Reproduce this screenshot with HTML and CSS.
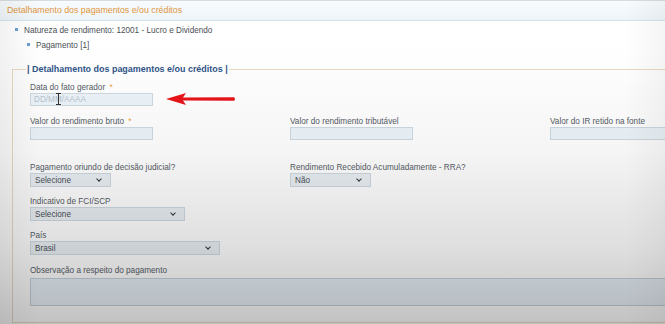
FILE: index.html
```html
<!DOCTYPE html>
<html lang="pt-BR">
<head>
    <meta charset="UTF-8">
    <meta name="viewport" content="width=device-width, initial-scale=1.0">
    <title>Detalhamento dos pagamentos e/ou créditos</title>
    <link rel="stylesheet" href="styles.css">
</head>
<body>
    <div class="panel-title">Detalhamento dos pagamentos e/ou créditos</div>

    <ul class="tree">
        <li>Natureza de rendimento: 12001 - Lucro e Dividendo
            <ul>
                <li>Pagamento [1]</li>
            </ul>
        </li>
    </ul>

    <fieldset class="group">
        <legend>| Detalhamento dos pagamentos e/ou créditos |</legend>

        <!-- data -->
        <div class="row first">
            <div class="field">
                <label for="dt-fato">Data do fato gerador <span class="req">*</span></label>
                <div class="mark-wrap">
                    <input type="text" id="dt-fato" class="txt" placeholder="DD/MM/AAAA">
                    <span class="ibeam"></span>
                    <svg class="arrow" width="70" height="14" viewBox="0 0 70 14">
                        <path d="M0 7 L20 1 L17 5.6 L68 5.2 Q70 7 68 8.8 L17 8.4 L20 13 Z" fill="#e8141a"/>
                    </svg>
                </div>
            </div>
        </div>

        <!-- valores -->
        <div class="row second">
            <div class="field">
                <label for="vl-bruto">Valor do rendimento bruto <span class="req">*</span></label>
                <input type="text" id="vl-bruto" class="txt">
            </div>
            <div class="field">
                <label for="vl-trib">Valor do rendimento tributável</label>
                <input type="text" id="vl-trib" class="txt">
            </div>
            <div class="field">
                <label for="vl-ir">Valor do IR retido na fonte</label>
                <input type="text" id="vl-ir" class="txt">
            </div>
        </div>

        <div class="row spaced">
            <div class="field">
                <label>Pagamento oriundo de decisão judicial?</label>
                <div class="sel w81">Selecione</div>
            </div>
            <div class="field">
                <label>Rendimento Recebido Acumuladamente - RRA?</label>
                <div class="sel w81">Não</div>
            </div>
        </div>

        <div class="row">
            <div class="field">
                <label>Indicativo de FCI/SCP</label>
                <div class="sel w155">Selecione</div>
            </div>
        </div>

        <div class="row">
            <div class="field">
                <label>País</label>
                <div class="sel w190">Brasil</div>
            </div>
        </div>

        <div class="row last">
            <div class="field full">
                <label for="obs">Observação a respeito do pagamento</label>
                <textarea id="obs" class="obs"></textarea>
            </div>
        </div>
    </fieldset>

    <div class="shade"></div>
</body>
</html>
```

FILE: styles.css
```css
body {
    margin: 0;
    width: 665px;
    height: 324px;
    overflow: hidden;
    position: relative;
    font-family: 'Liberation Sans', Arial, sans-serif;
    font-size: 8.2px;
    color: #555d66;
    background: #fff;
}

.panel-title {
    height: 19px;
    line-height: 19px;
    padding-left: 7px;
    font-size: 8.8px;
    color: #e0963c;
    background: linear-gradient(#f8fbfd, #eef5fa);
    border-top: 1px solid #d9dcde;
    border-bottom: 1px solid #d6e1e8;
}

.tree {
    list-style: none;
    margin: 2px 0 0 0;
    padding: 0 0 0 15px;
}

.tree ul {
    list-style: none;
    margin: 0;
    padding: 0 0 0 12px;
}

.tree li {
    line-height: 15px;
    color: #4a4f55;
}

.tree li::before {
    content: "";
    display: inline-block;
    width: 3px;
    height: 3px;
    margin: 0 6px 2px 0;
    background: #6a9ed0;
    vertical-align: middle;
}

.group {
    margin: 11px 0 0 12px;
    width: 900px;
    padding: 0 0 16px 17px;
    border: 1px solid #e9dcc2;
    box-sizing: border-box;
}

.group legend {
    padding: 0 1px;
    margin-left: -4px;
    font-size: 8.95px;
    font-weight: bold;
    color: #2f5488;
}

.row {
    display: grid;
    grid-template-columns: 260px 260px 260px;
    margin-top: 9px;
}

.row.first {
    margin-top: 8px;
}

.row.second {
    margin-top: 10px;
}

.row.spaced {
    margin-top: 22px;
}

.row.last {
    margin-top: 10px;
}

.field label {
    display: block;
    line-height: 11px;
}

.row.last label {
    margin-bottom: 2px;
}

.req {
    color: #f0a040;
    margin-left: 2px;
}

.txt {
    display: block;
    width: 123px;
    height: 13px;
    box-sizing: border-box;
    margin: 0;
    padding: 0 3px;
    font: 8.2px 'Liberation Sans', Arial, sans-serif;
    background: #edf4f9;
    border: 1px solid #ccd9e3;
    border-radius: 0;
}

.txt::placeholder {
    color: #b6c4d0;
}

.mark-wrap {
    position: relative;
}

.arrow {
    position: absolute;
    left: 136px;
    top: -1px;
}

.ibeam {
    position: absolute;
    left: 28px;
    top: 0;
    width: 1px;
    height: 12px;
    background: #333;
}

.ibeam::before,
.ibeam::after {
    content: "";
    position: absolute;
    left: -2px;
    width: 5px;
    height: 1px;
    background: #333;
}

.ibeam::before { top: 0; }
.ibeam::after { bottom: 0; }

.sel {
    position: relative;
    height: 14px;
    line-height: 13px;
    box-sizing: border-box;
    padding-left: 4px;
    color: #4a4f55;
    background: #e9eff4;
    border: 1px solid #cfd9e1;
}

.sel::after {
    content: "";
    position: absolute;
    right: 9px;
    top: 3px;
    width: 3px;
    height: 3px;
    border-right: 1.5px solid #333;
    border-bottom: 1.5px solid #333;
    transform: rotate(45deg);
}

.w81 { width: 81px; }
.w155 { width: 155px; }
.w190 { width: 190px; }

.field.full {
    grid-column: 1 / -1;
}

.obs {
    display: block;
    width: 700px;
    height: 28px;
    box-sizing: border-box;
    margin: 0;
    background: #e9f1f7;
    border: 1px solid #c4d3de;
    resize: none;
}

.shade {
    position: absolute;
    left: 0;
    top: 0;
    right: 0;
    bottom: 0;
    pointer-events: none;
    background:
        linear-gradient(90deg, rgba(0,0,0,0.05), rgba(0,0,0,0) 6%, rgba(0,0,0,0) 94%, rgba(0,0,0,0.04)),
        linear-gradient(rgba(0,0,0,0) 0, rgba(0,0,0,0) 45px, rgba(0,0,0,0.04) 150px, rgba(0,0,0,0.13) 250px, rgba(0,0,0,0.24) 324px);
}
```
